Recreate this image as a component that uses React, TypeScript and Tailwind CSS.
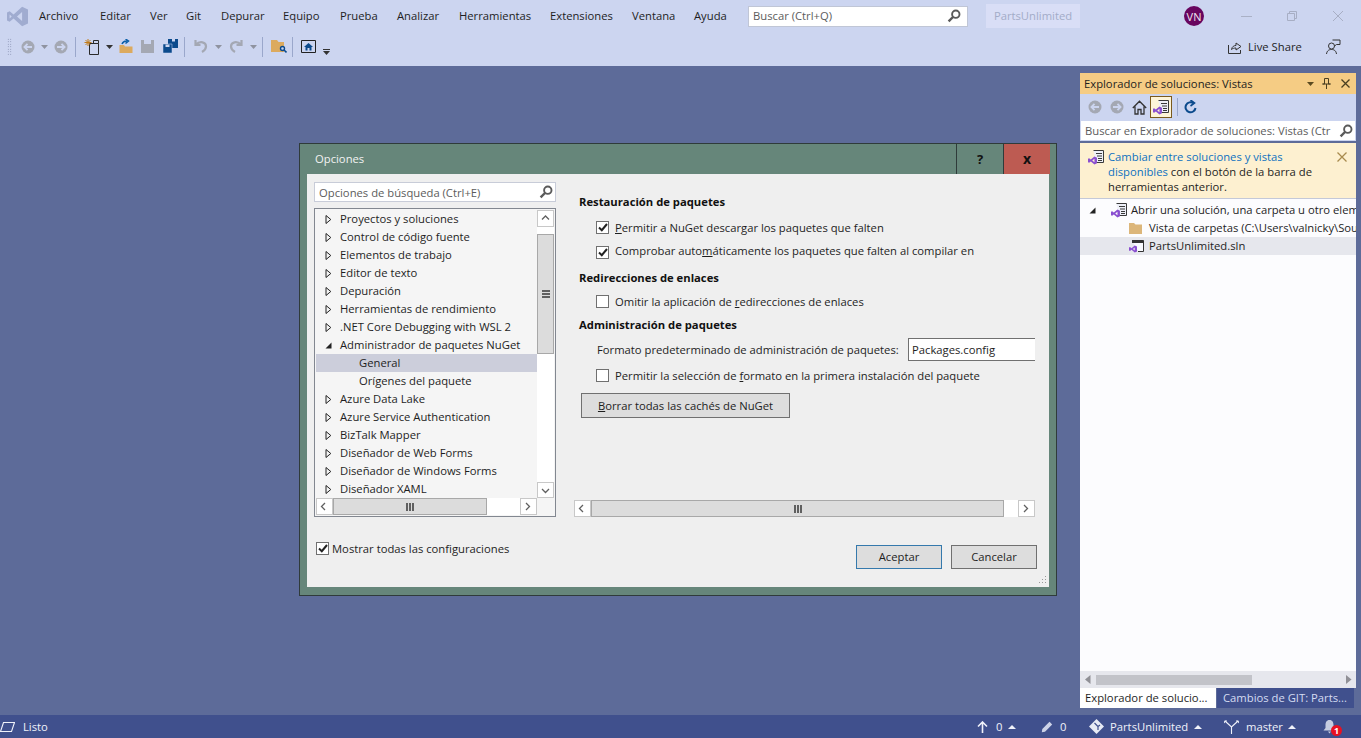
import type { ReactNode } from "react";

const MENU = [
  { label: "Archivo", cls: "w-[61px]" },
  { label: "Editar", cls: "w-[50px]" },
  { label: "Ver", cls: "w-[36px]" },
  { label: "Git", cls: "w-[35px]" },
  { label: "Depurar", cls: "w-[62px]" },
  { label: "Equipo", cls: "w-[57px]" },
  { label: "Prueba", cls: "w-[57px]" },
  { label: "Analizar", cls: "w-[62px]" },
  { label: "Herramientas", cls: "w-[91px]" },
  { label: "Extensiones", cls: "w-[82px]" },
  { label: "Ventana", cls: "w-[62px]" },
  { label: "Ayuda", cls: "w-[54px]" },
];

const TREE_TOP = [
  "Proyectos y soluciones",
  "Control de código fuente",
  "Elementos de trabajo",
  "Editor de texto",
  "Depuración",
  "Herramientas de rendimiento",
  ".NET Core Debugging with WSL 2",
];

const TREE_BOTTOM = [
  "Azure Data Lake",
  "Azure Service Authentication",
  "BizTalk Mapper",
  "Diseñador de Web Forms",
  "Diseñador de Windows Forms",
  "Diseñador XAML",
];

function Search({ color = "#5a5a5a", size = 14 }: { color?: string; size?: number }) {
  return (
    <svg width={size} height={size} viewBox="0 0 14 14" fill="none">
      <circle cx="8.8" cy="5.2" r="3.7" stroke={color} strokeWidth="1.9" />
      <path d="M6 8 L1.6 12.4" stroke={color} strokeWidth="2.4" />
    </svg>
  );
}

function SolutionViewIcon() {
  return (
    <svg width="17" height="16" viewBox="0 0 17 16">
      <path d="M5.5 1.5 H15.5 V13.5 H8" fill="#eef0f8" stroke="#3a3a3a" />
      <path d="M8 4.5 H14 M9 7 H14 M10 9.5 H14 M10 11.5 H14" stroke="#3a3a3a" />
      <g transform="translate(0 7) scale(0.56)">
        <path d="M11.5 1 L16 3 V13 L11.5 15 L5 9.6 L2 12 L0 11 V5 L2 4 L5 6.4 Z M11.5 5 L7.6 8 L11.5 11 Z" fill="#8a4fd0" fillRule="evenodd" />
      </g>
    </svg>
  );
}

function BackForward({ dir }: { dir: "l" | "r" }) {
  return (
    <svg width="14" height="14" viewBox="0 0 14 14">
      <circle cx="7" cy="7" r="6.5" fill="#a4a8b3" />
      {dir === "l" ? (
        <path d="M3 7 H11 M6.5 3.8 L3.4 7 L6.5 10.2" stroke="#ccd5f0" strokeWidth="1.8" fill="none" />
      ) : (
        <path d="M3 7 H11 M7.5 3.8 L10.6 7 L7.5 10.2" stroke="#ccd5f0" strokeWidth="1.8" fill="none" />
      )}
    </svg>
  );
}

function Caret({ color = "#6d6d6d" }: { color?: string }) {
  return (
    <svg width="7" height="4" viewBox="0 0 7 4">
      <path d="M0 0 H7 L3.5 4 Z" fill={color} />
    </svg>
  );
}

function Separator() {
  return <div className="h-[20px] w-px bg-[#9aa7cb]" />;
}

function Toolbar() {
  return (
    <div className="flex h-[29px] items-center pl-[7px]">
      <div className="mr-[9px] h-[18px] w-[5px] bg-[radial-gradient(#7c86a6_0.7px,transparent_0.8px)] bg-[length:2.5px_2.5px]" />
      <BackForward dir="l" />
      <div className="ml-[6px] mr-[6px]"><Caret color="#8f93a0" /></div>
      <BackForward dir="r" />
      <div className="ml-[7px] mr-[8px]"><Separator /></div>
      {/* nuevo proyecto */}
      <svg width="16" height="16" viewBox="0 0 16 16">
        <path d="M5.5 4.5 H14.5 V15.5 H5.5 Z" fill="#ccd5f0" stroke="#2a2a2a" />
        <path d="M9.5 4.5 V1.5 H14.5 V4.5" fill="none" stroke="#2a2a2a" />
        <path d="M4 0 V7 M0.5 3.5 H7.5 M1.5 1 L6.5 6 M6.5 1 L1.5 6" stroke="#c27d1a" strokeWidth="1" />
      </svg>
      <div className="ml-[6px] mr-[6px]"><Caret color="#333333" /></div>
      {/* abrir */}
      <svg width="15" height="15" viewBox="0 0 15 15">
        <path d="M0.5 6 H5 L6 7.5 H13.5 V14 H0.5 Z" fill="#dcaa5e" />
        <path d="M3 5 C4 2.5 6 1.8 8 2 M6.5 0 L9.5 2 L6.5 4.5" stroke="#0a5fa8" strokeWidth="1.5" fill="none" />
      </svg>
      <div className="w-[7px]" />
      {/* guardar */}
      <svg width="13" height="13" viewBox="0 0 13 13">
        <path d="M0 0 H13 V13 H0 Z" fill="#a4a8b3" />
        <path d="M3 0 H10 V4 H3 Z" fill="#ccd5f0" />
      </svg>
      <div className="w-[9px]" />
      {/* guardar todo */}
      <svg width="15" height="15" viewBox="0 0 15 15">
        <path d="M5 0 H15 V9 H5 Z" fill="#0b4a8c" />
        <path d="M0 5 H9 V14 H0 Z" fill="#0b4a8c" stroke="#ccd5f0" strokeWidth="0.5" />
        <path d="M9 0 H12 V2.5 H9 Z M2.5 5.5 H6.5 V8 H2.5 Z" fill="#ccd5f0" />
      </svg>
      <div className="ml-[6px] mr-[9px]"><Separator /></div>
      {/* deshacer */}
      <svg width="14" height="15" viewBox="0 0 14 15">
        <path d="M1.5 1 V6 H6.5 M2 5.5 C6 1.5 12 3 12 7.5 C12 10 10.5 11.5 8 13" fill="none" stroke="#a4a8b3" strokeWidth="2.2" />
      </svg>
      <div className="ml-[7px] mr-[7px]"><Caret color="#8f93a0" /></div>
      <svg width="14" height="15" viewBox="0 0 14 15">
        <path d="M12.5 1 V6 H7.5 M12 5.5 C8 1.5 2 3 2 7.5 C2 10 3.5 11.5 6 13" fill="none" stroke="#a4a8b3" strokeWidth="2.2" />
      </svg>
      <div className="ml-[7px] mr-[5px]"><Caret color="#8f93a0" /></div>
      <Separator />
      <div className="w-[8px]" />
      {/* carpeta con lupa */}
      <svg width="16" height="15" viewBox="0 0 16 15">
        <path d="M0 1 H6 L7.5 3 H13 V13 H0 Z" fill="#dcaa5e" />
        <circle cx="11.5" cy="9.5" r="2" fill="#ccd5f0" stroke="#0b4a8c" strokeWidth="1.4" />
        <path d="M13 11 L15.5 13.5" stroke="#0b4a8c" strokeWidth="1.6" />
      </svg>
      <div className="ml-[5px] mr-[8px]"><Separator /></div>
      {/* vista de inicio */}
      <svg width="15" height="13" viewBox="0 0 15 13">
        <path d="M0.5 0.5 H14.5 V12.5 H0.5 Z" fill="#ccd5f0" stroke="#222222" />
        <path d="M7.5 3 L12 7 H10.5 V10.5 H8.5 V8 H6.5 V10.5 H4.5 V7 H3 Z" fill="#0b4a8c" />
      </svg>
      <div className="ml-[7px] mt-[10px] flex flex-col gap-px">
        <div className="h-px w-[7px] bg-[#333333]" />
        <Caret color="#333333" />
      </div>
      <div className="ml-auto mt-[1px] flex items-center pr-[20px]">
        <svg width="14" height="14" viewBox="0 0 14 14" fill="none" stroke="#333333">
          <path d="M0.5 5 V13.5 H12.5 V10" />
          <path d="M3.5 9.5 C4 6.5 6 5.5 8 5.5 V3 L13 6.5 L8 10 V8 C6 8 4.5 8.5 3.5 9.5 Z" />
        </svg>
        <span className="ml-[6px] w-[53px] whitespace-nowrap text-[#1e1e1e]">Live Share</span>
        <svg className="ml-[25px]" width="15" height="16" viewBox="0 0 15 16" fill="none" stroke="#333333">
          <circle cx="5.5" cy="7" r="3" />
          <path d="M0.5 15 C1 11.5 3 10.5 5.5 10.5 C8 10.5 10 11.5 10.5 15" />
          <path d="M6.5 1 H14 V5.5 H10.5 L8.5 7" />
        </svg>
      </div>
    </div>
  );
}

function TitleBar() {
  return (
    <div className="flex h-[32px] items-center">
      <div className="ml-[7px] w-[32px]">
        <svg width="21" height="21" viewBox="0 0 16 16">
          <path d="M11.5 0.5 L16 2.6 V13.4 L11.5 15.5 L5 9.6 L2 12 L0 11 V5 L2 4 L5 6.4 Z M11.5 4.6 L7.6 8 L11.5 11.4 Z M2 6.4 V9.6 L3.6 8 Z" fill="#a0acd0" fillRule="evenodd" />
        </svg>
      </div>
      {MENU.map((m) => (
        <span key={m.label} className={`${m.cls} text-[#1e1e1e]`}>{m.label}</span>
      ))}
      <div className="flex h-[21px] w-[220px] items-center justify-between border border-[#c0c6d6] bg-white pl-[4px] pr-[6px] text-[#5c5c5c]">
        <span>Buscar (Ctrl+Q)</span>
        <Search />
      </div>
      <div className="ml-[18px] flex h-[24px] w-[94px] items-center justify-center bg-[#d9def6] text-[#a3acc8]">PartsUnlimited</div>
      <div className="ml-[104px] flex h-[20px] w-[20px] items-center justify-center rounded-full bg-[#68065f] text-[11px] text-[#f0e4f0]">VN</div>
      <div className="ml-[37px] h-px w-[11px] bg-[#aab1c6]" />
      <svg className="ml-[35px]" width="10" height="10" viewBox="0 0 10 10" fill="none" stroke="#a7aec4">
        <path d="M0.5 2.5 H7.5 V9.5 H0.5 Z M2.5 2.5 V0.5 H9.5 V7.5 H7.5" />
      </svg>
      <svg className="ml-[36px]" width="10" height="10" viewBox="0 0 10 10" stroke="#a7aec4">
        <path d="M0 0 L10 10 M10 0 L0 10" />
      </svg>
    </div>
  );
}

function ScrollArrow({ dir }: { dir: "l" | "r" | "u" | "d" }) {
  const d = { l: "M5 1 L1.5 4.5 L5 8", r: "M2 1 L5.5 4.5 L2 8", u: "M1 5.5 L4.5 2 L8 5.5", d: "M1 3 L4.5 6.5 L8 3" }[dir];
  return (
    <svg width="9" height="9" viewBox="0 0 9 9" fill="none" stroke="#606060" strokeWidth="1.3">
      <path d={d} />
    </svg>
  );
}

function Grip({ vertical = false }: { vertical?: boolean }) {
  return (
    <div className={vertical ? "flex flex-col gap-px" : "flex gap-px"}>
      <div className={vertical ? "h-[2px] w-[8px] bg-[#606060]" : "h-[8px] w-[2px] bg-[#606060]"} />
      <div className={vertical ? "h-[2px] w-[8px] bg-[#606060]" : "h-[8px] w-[2px] bg-[#606060]"} />
      <div className={vertical ? "h-[2px] w-[8px] bg-[#606060]" : "h-[8px] w-[2px] bg-[#606060]"} />
    </div>
  );
}

function TreeRow({ label, open = false }: { label: string; open?: boolean }) {
  return (
    <div className="flex h-[18px] items-center pl-[9px] text-[#1e1e1e]">
      {open ? (
        <svg width="7" height="7" viewBox="0 0 7 7" className="mr-[8px] shrink-0">
          <path d="M6.5 0.5 V6.5 H0.5 Z" fill="#222222" />
        </svg>
      ) : (
        <svg width="7" height="9" viewBox="0 0 7 9" className="mr-[8px] shrink-0" fill="none" stroke="#222222">
          <path d="M1 0.5 L5.8 4.5 L1 8.5 Z" />
        </svg>
      )}
      <span>{label}</span>
    </div>
  );
}

function Check({ checked = false }: { checked?: boolean }) {
  return (
    <div className="flex h-[13px] w-[13px] shrink-0 items-center justify-center border border-[#707070] bg-white">
      {checked && (
        <svg width="10" height="9" viewBox="0 0 10 9" fill="none" stroke="#222222" strokeWidth="2">
          <path d="M1 4.5 L3.8 7.2 L9 1" />
        </svg>
      )}
    </div>
  );
}

function Option({ checked, children, top = "" }: { checked?: boolean; children: ReactNode; top?: string }) {
  return (
    <div className="flex h-[23px] items-center pl-[17px]">
      <div className={top}><Check checked={checked} /></div>
      <span className="ml-[6px] text-[#1e1e1e]">{children}</span>
    </div>
  );
}

function OptionsDialog() {
  return (
    <div className="absolute left-[299px] top-[143px] flex h-[453px] w-[758px] flex-col border border-[#2f3b3a] bg-[#66867a]">
      <div className="flex h-[30px] shrink-0 items-center justify-between">
        <span className="pl-[15px] text-[#f2f2f2]">Opciones</span>
        <div className="flex h-full pr-[6px]">
          <div className="flex w-[47px] items-center justify-center border-l border-[#2f3b3a] text-[13px] font-bold text-[#111111]">?</div>
          <div className="flex w-[47px] items-center justify-center border-l border-[#2f3b3a] bg-[#bd5b52] text-[14px] font-bold text-[#111111]">x</div>
        </div>
      </div>
      <div className="mx-[7px] flex h-[413px] flex-col bg-[#efefef]">
        <div className="flex h-[358px] pl-[7px] pt-[8px]">
          {/* izquierda */}
          <div className="w-[242px]">
            <div className="flex h-[20px] items-center justify-between border border-[#c8ccd8] bg-white pl-[4px] pr-[2px] text-[#5c5c5c]">
              <span className="pt-px">Opciones de búsqueda (Ctrl+E)</span>
              <Search />
            </div>
            <div className="mt-[6px] flex h-[309px] flex-col border border-[#828790] bg-[#f5f5f5] p-px">
              <div className="flex h-[288px]">
                <div className="w-[221px]">
                  {TREE_TOP.map((t) => <TreeRow key={t} label={t} />)}
                  <TreeRow label="Administrador de paquetes NuGet" open />
                  <div className="flex h-[18px] items-center bg-[#cccedb] pl-[43px] text-[#1e1e1e]">General</div>
                  <div className="flex h-[18px] items-center pl-[43px] text-[#1e1e1e]">Orígenes del paquete</div>
                  {TREE_BOTTOM.map((t) => <TreeRow key={t} label={t} />)}
                </div>
                <div className="flex w-[17px] flex-col bg-white">
                  <div className="flex h-[17px] items-center justify-center border border-[#c8c8c8]"><ScrollArrow dir="u" /></div>
                  <div className="mt-[7px] flex h-[120px] items-center justify-center border border-[#a8a8a8] bg-[#dcdcdc]"><Grip vertical /></div>
                  <div className="flex-1" />
                  <div className="flex h-[16px] items-center justify-center border border-[#c8c8c8]"><ScrollArrow dir="d" /></div>
                </div>
              </div>
              <div className="flex h-[17px] w-[221px]">
                <div className="flex w-[17px] items-center justify-center border border-[#c8c8c8] bg-white"><ScrollArrow dir="l" /></div>
                <div className="flex w-[154px] items-center justify-center border border-[#a8a8a8] bg-[#dcdcdc]"><Grip /></div>
                <div className="flex-1 bg-white" />
                <div className="flex w-[17px] items-center justify-center border border-[#c8c8c8] bg-white"><ScrollArrow dir="r" /></div>
              </div>
            </div>
          </div>
          {/* derecha */}
          <div className="ml-[18px] flex w-[462px] flex-col pb-[15px] pt-[8px]">
            <div className="flex h-[24px] items-center pl-[5px] font-bold text-[#111111]">Restauración de paquetes</div>
            <div className="mt-[2px] pl-[5px]">
              <Option checked><span className="underline">P</span>ermitir a NuGet descargar los paquetes que falten</Option>
              <Option checked top="mt-[3px]">Comprobar auto<span className="underline">m</span>áticamente los paquetes que falten al compilar en</Option>
            </div>
            <div className="mt-[4px] flex h-[24px] items-center pl-[5px] font-bold text-[#111111]">Redirecciones de enlaces</div>
            <div className="pl-[5px]">
              <Option>Omitir la aplicación de <span className="underline">r</span>edirecciones de enlaces</Option>
            </div>
            <div className="flex h-[24px] items-center pl-[5px] font-bold text-[#111111]">Administración de paquetes</div>
            <div className="mt-px flex h-[23px] items-center pl-[23px] text-[#1e1e1e]">
              <span className="w-[311px]">Formato predeterminado de administración de paquetes:</span>
              <div className="flex h-[23px] w-[127px] items-center border border-r-0 border-[#707070] bg-white pl-[3px]">Packages.config</div>
            </div>
            <div className="mt-[3px] pl-[5px]">
              <Option>Permitir la selección de <span className="underline">f</span>ormato en la primera instalación del paquete</Option>
            </div>
            <div className="ml-[7px] mt-[6px] flex h-[25px] w-[209px] items-center justify-center border border-[#707070] bg-[#dddddd] text-[#1e1e1e]">
              <span><span className="underline">B</span>orrar todas las cachés de NuGet</span>
            </div>
            <div className="flex-1" />
            <div className="flex h-[17px] w-[461px]">
              <div className="flex w-[17px] items-center justify-center border border-[#c8c8c8] bg-white"><ScrollArrow dir="l" /></div>
              <div className="flex w-[413px] items-center justify-center border border-[#a8a8a8] bg-[#dcdcdc]"><Grip /></div>
              <div className="flex-1 bg-white" />
              <div className="flex w-[17px] items-center justify-center border border-[#c8c8c8] bg-white"><ScrollArrow dir="r" /></div>
            </div>
          </div>
        </div>
        <div className="relative flex flex-1 items-start pl-[9px] pr-[12px]">
          <div className="mt-[10px] flex items-center">
            <Check checked />
            <span className="ml-[3px] text-[#1e1e1e]">Mostrar todas las configuraciones</span>
          </div>
          <div className="ml-auto mt-[13px] flex gap-[9px]">
            <div className="flex h-[24px] w-[86px] items-center justify-center border border-[#3579ac] bg-[#dddddd] text-[#1e1e1e]">Aceptar</div>
            <div className="flex h-[24px] w-[86px] items-center justify-center border border-[#707070] bg-[#dddddd] text-[#1e1e1e]">Cancelar</div>
          </div>
          <svg className="absolute bottom-[2px] right-[2px]" width="9" height="9" viewBox="0 0 9 9" fill="#9a9a9a">
            <path d="M7 0 h1 v1 h-1 Z M4 3 h1 v1 h-1 Z M7 3 h1 v1 h-1 Z M1 6 h1 v1 h-1 Z M4 6 h1 v1 h-1 Z M7 6 h1 v1 h-1 Z" />
          </svg>
        </div>
      </div>
    </div>
  );
}

function SolutionExplorer() {
  return (
    <div className="flex w-[281px] flex-col pr-[5px] pt-[7px] pb-[7px]">
      <div className="flex h-[21px] items-center justify-between bg-[#f5cc84] pl-[4px] pr-[6px] text-[#1e1e1e]">
        <span>Explorador de soluciones: Vistas</span>
        <div className="flex items-center">
          <Caret color="#5a4a20" />
          <svg className="ml-[8px]" width="9" height="11" viewBox="0 0 9 11" fill="none" stroke="#4a3f20">
            <path d="M2.5 0.5 H6.5 V6 H8.5 H0.5 H2.5 Z M4.5 6 V11" />
          </svg>
          <svg className="ml-[10px]" width="9" height="9" viewBox="0 0 9 9" stroke="#4a3f20" strokeWidth="1.3">
            <path d="M0.5 0.5 L8.5 8.5 M8.5 0.5 L0.5 8.5" />
          </svg>
        </div>
      </div>
      <div className="flex h-[26px] items-center bg-[#ccd5f0] pl-[8px]">
        <BackForward dir="l" />
        <div className="w-[8px]" />
        <BackForward dir="r" />
        <svg className="ml-[8px]" width="15" height="15" viewBox="0 0 15 15" fill="none" stroke="#333333" strokeWidth="1.3">
          <path d="M0.8 8 L7.5 1.2 L14.2 8 M3 6.5 V14 H6 V9.5 H9 V14 H12 V6.5" />
        </svg>
        <div className="ml-[3px] flex h-[22px] w-[22px] items-center justify-center border border-[#7a5a1c] bg-[#fdf4d8]">
          <SolutionViewIcon />
        </div>
        <div className="ml-[5px] mr-[6px] h-[18px] w-px bg-[#9aa7cb]" />
        <svg width="13" height="14" viewBox="0 0 13 14" fill="none" stroke="#0b4a8c" strokeWidth="2">
          <path d="M9.5 3.2 A5 5 0 1 0 11.5 8" />
          <path d="M6.5 0 L10.5 3 L6.5 6" strokeWidth="1.6" />
        </svg>
      </div>
      <div className="flex h-[21px] items-center justify-between overflow-hidden border border-[#ccd5f0] bg-white pl-[4px] pr-[2px] text-[#5c5c5c]">
        <span className="w-[251px] overflow-hidden whitespace-nowrap">Buscar en Explorador de soluciones: Vistas (Ctr</span>
        <Search />
      </div>
      <div className="mt-[2px] flex h-[56px] border-b border-[#c4c9d8] bg-[#fdf0d0] pl-[8px] pr-[9px] pt-[6px]">
        <div className="w-[20px] shrink-0"><SolutionViewIcon /></div>
        <div className="w-[220px] leading-[15px] text-[#1e1e1e]">
          <span className="text-[#0e70c0]">Cambiar entre soluciones y vistas disponibles</span> con el botón de la barra de herramientas anterior.
        </div>
        <svg className="ml-auto mt-[3px]" width="10" height="10" viewBox="0 0 10 10" stroke="#a88b4e" strokeWidth="1.3">
          <path d="M0.5 0.5 L9.5 9.5 M9.5 0.5 L0.5 9.5" />
        </svg>
      </div>
      <div className="flex-1 overflow-hidden bg-[#fcfcfe] pt-[2px] whitespace-nowrap text-[#1e1e1e]">
        <div className="flex h-[18px] items-center pl-[9px]">
          <svg width="7" height="7" viewBox="0 0 7 7" className="shrink-0"><path d="M6.5 0.5 V6.5 H0.5 Z" fill="#222222" /></svg>
          <div className="ml-[15px] w-[20px] shrink-0"><SolutionViewIcon /></div>
          <span>Abrir una solución, una carpeta u otro elemento</span>
        </div>
        <div className="flex h-[18px] items-center pl-[49px]">
          <svg width="13" height="11" viewBox="0 0 13 11" className="shrink-0"><path d="M0 0 H5 L6.5 1.5 H13 V11 H0 Z" fill="#dcb67a" /></svg>
          <span className="ml-[7px]">Vista de carpetas (C:\Users\valnicky\Source\Repos)</span>
        </div>
        <div className="flex h-[18px] items-center bg-[#e6e7ed] pl-[49px]">
          <svg width="15" height="13" viewBox="0 0 15 13" className="shrink-0">
            <path d="M3 0.5 H14.5 V11.5 H9" fill="#f8f9fe" stroke="#333333" />
            <path d="M3 0.5 H14.5 V3 H3 Z" fill="#333333" />
            <g transform="translate(0 5) scale(0.5)">
              <path d="M11.5 1 L16 3 V13 L11.5 15 L5 9.6 L2 12 L0 11 V5 L2 4 L5 6.4 Z M11.5 5 L7.6 8 L11.5 11 Z" fill="#8a4fd0" fillRule="evenodd" />
            </g>
          </svg>
          <span className="ml-[5px]">PartsUnlimited.sln</span>
        </div>
      </div>
      <div className="flex h-[17px] items-center bg-[#e6e7ed] pl-[5px] pr-[4px]">
        <svg width="6" height="9" viewBox="0 0 6 9"><path d="M5.5 0 V9 L0 4.5 Z" fill="#909096" /></svg>
        <div className="ml-[5px] h-[10px] w-[156px] bg-[#c2c3c9]" />
        <svg className="ml-auto" width="6" height="9" viewBox="0 0 6 9"><path d="M0 0 V9 L5.5 4.5 Z" fill="#909096" /></svg>
      </div>
      <div className="flex h-[20px]">
        <div className="flex w-[136px] items-center bg-white pl-[5px] text-[#1e1e1e]">Explorador de solucio...</div>
        <div className="ml-px flex w-[137px] items-center bg-[#40508d] pl-[6px] text-[#d5dcf2]">Cambios de GIT: Parts...</div>
      </div>
    </div>
  );
}

function StatusBar() {
  return (
    <div className="flex h-[23px] items-center bg-[#40508d] text-[#f0f2fa]">
      <svg width="15" height="10" viewBox="0 0 15 10" fill="none" stroke="#f0f2fa" strokeWidth="1.1">
        <path d="M3.5 0.5 H14.5 L11.5 9.5 H0.5 Z" />
      </svg>
      <span className="ml-[8px]">Listo</span>
      <div className="ml-auto flex items-center">
        <svg width="11" height="12" viewBox="0 0 11 12" fill="none" stroke="#f0f2fa" strokeWidth="1.6">
          <path d="M5.5 12 V1.5 M1 5.5 L5.5 1 L10 5.5" />
        </svg>
        <span className="ml-[8px] w-[7px]">0</span>
        <svg className="ml-[5px]" width="8" height="4" viewBox="0 0 8 4"><path d="M0 4 H8 L4 0 Z" fill="#f0f2fa" /></svg>
        <svg className="ml-[25px]" width="12" height="12" viewBox="0 0 12 12" fill="#cdd3e8">
          <path d="M8.5 0.8 L11.2 3.5 L4 10.7 L0.8 11.2 L1.3 8 Z" />
        </svg>
        <span className="ml-[7px] w-[7px]">0</span>
        <svg className="ml-[22px]" width="15" height="15" viewBox="0 0 15 15">
          <path d="M7.5 0 L15 7.5 L7.5 15 L0 7.5 Z" fill="#e8ebf5" />
          <path d="M5.5 4 L9 7.5 V11 M9 7.5 L11 6" stroke="#40508d" strokeWidth="1.2" fill="none" />
        </svg>
        <span className="ml-[6px] w-[78px] whitespace-nowrap">PartsUnlimited</span>
        <svg className="ml-[6px]" width="8" height="4" viewBox="0 0 8 4"><path d="M0 4 H8 L4 0 Z" fill="#f0f2fa" /></svg>
        <svg className="ml-[22px]" width="15" height="14" viewBox="0 0 15 14" fill="none" stroke="#f0f2fa" strokeWidth="1.1">
          <path d="M1 1 L7.5 7 L14 1 M7.5 7 V14" />
          <path d="M0 3 L1 1 L3 1 M12 1 L14 1 L15 3" />
        </svg>
        <span className="ml-[7px] w-[36px]">master</span>
        <svg className="ml-[6px]" width="8" height="4" viewBox="0 0 8 4"><path d="M0 4 H8 L4 0 Z" fill="#f0f2fa" /></svg>
        <div className="relative ml-[27px] mr-[25px] h-[14px] w-[13px]">
          <svg width="13" height="14" viewBox="0 0 13 14">
            <path d="M6.5 0 C9.5 0 10.5 2.5 10.5 5 V8 L12.5 10.5 H0.5 L2.5 8 V5 C2.5 2.5 3.5 0 6.5 0 Z M5 11.5 H8 L6.5 13.5 Z" fill="#c6cce0" />
          </svg>
          <div className="absolute left-[8px] top-[5px] flex h-[11px] w-[11px] items-center justify-center rounded-full bg-[#e81123] text-[9px] font-bold text-white">1</div>
        </div>
      </div>
    </div>
  );
}

export default function App() {
  return (
    <div className="relative flex h-[738px] w-[1361px] flex-col overflow-hidden bg-[#5d6b99] font-['Open_Sans',sans-serif] text-[11.25px] leading-none">
      <div className="h-[66px] bg-[#ccd5f0]">
        <TitleBar />
        <Toolbar />
      </div>
      <div className="flex flex-1 justify-end">
        <SolutionExplorer />
      </div>
      <StatusBar />
      <OptionsDialog />
    </div>
  );
}
